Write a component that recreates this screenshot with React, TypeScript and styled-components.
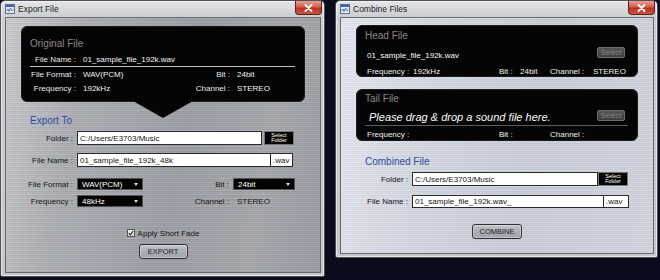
import styled, { createGlobalStyle, css } from "styled-components";

const GlobalStyle = createGlobalStyle`
  html, body {
    margin: 0;
    padding: 0;
    background: #0a0c1c;
  }
  body {
    font-family: "Liberation Sans", Arial, sans-serif;
  }
  * {
    box-sizing: border-box;
  }
`;

const steel = `
  repeating-linear-gradient(180deg, rgba(255,255,255,0.10) 0 1px, rgba(0,0,0,0.06) 1px 2px, rgba(255,255,255,0) 2px 3px, rgba(0,0,0,0.04) 3px 4px),
  linear-gradient(100deg, #caccd1 0%, #aeb0b6 22%, #9ea0a7 55%, #a6a8ae 80%, #9b9da4 100%)
`;

const frost = `
  repeating-linear-gradient(180deg, rgba(255,255,255,0.16) 0 1px, rgba(0,0,0,0.04) 1px 2px, rgba(255,255,255,0) 2px 3px, rgba(0,0,0,0.03) 3px 4px),
  linear-gradient(100deg, #e4e7ef 0%, #d3d7e1 30%, #c9cdd8 60%, #d1d4de 100%)
`;

const Desktop = styled.div`
  width: 660px;
  height: 280px;
  display: flex;
  align-items: flex-start;
  gap: 10px;
  background: #0a0c1c;
  overflow: hidden;
`;

const Window = styled.div<{ $width: number; $height: number }>`
  width: ${(p) => p.$width}px;
  height: ${(p) => p.$height}px;
  flex-shrink: 0;
  display: flex;
  flex-direction: column;
  padding: 0 3px 3px 4px;
  border: 1px solid #4e5055;
  border-radius: 5px 5px 2px 2px;
  background: linear-gradient(180deg, #e4e5e8 0, #cdcfd3 15px, #c4c6ca 100%);
  box-shadow: inset 0 0 0 1px rgba(255, 255, 255, 0.55);
`;

const TitleBar = styled.div`
  height: 16px;
  flex-shrink: 0;
  display: flex;
  align-items: center;
  gap: 3px;
`;

const Title = styled.span`
  font-size: 8.5px;
  color: #1b1b1b;
`;

const CloseButton = styled.div`
  margin-left: auto;
  margin-right: -1px;
  align-self: flex-start;
  width: 27px;
  height: 14px;
  display: flex;
  align-items: center;
  justify-content: center;
  border: 1px solid #5a2019;
  border-top: none;
  border-radius: 0 0 4px 4px;
  background: linear-gradient(180deg, #e8a094 0%, #d55e4b 45%, #ba3322 55%, #cc5540 100%);
`;

const Body = styled.div<{ $tone: "steel" | "frost" }>`
  flex: 1;
  display: flex;
  flex-direction: column;
  border: 1px solid #686a70;
  background: ${(p) => (p.$tone === "steel" ? steel : frost)};
`;

const Panel = styled.div<{ $width: number; $height: number; $top: number; $pointer?: boolean }>`
  position: relative;
  width: ${(p) => p.$width}px;
  height: ${(p) => p.$height}px;
  margin-top: ${(p) => p.$top}px;
  margin-left: 15px;
  display: flex;
  flex-direction: column;
  padding: 0 9px 0 8px;
  background: #050505;
  border: 1px solid #1e1e1e;
  border-radius: 6px;
  color: #f2f2f2;
  font-size: 8px;
  ${(p) =>
    p.$pointer &&
    css`
      &::after {
        content: "";
        position: absolute;
        top: 100%;
        left: 50%;
        transform: translateX(-50%);
        border-left: 30px solid transparent;
        border-right: 30px solid transparent;
        border-top: 17px solid #050505;
      }
    `}
`;

const PanelTitle = styled.div<{ $top: number }>`
  margin-top: ${(p) => p.$top}px;
  font-size: 10px;
  line-height: 12px;
  color: #8e8589;
`;

const Divider = styled.div<{ $top: number; $faint?: boolean }>`
  margin-top: ${(p) => p.$top}px;
  height: 1px;
  background: ${(p) => (p.$faint ? "rgba(255,255,255,0.35)" : "rgba(255,255,255,0.75)")};
`;

const InfoGrid = styled.div<{ $top: number }>`
  margin-top: ${(p) => p.$top}px;
  display: grid;
  grid-template-columns: 46px 60px 80px 60px;
  grid-auto-rows: 11px;
  column-gap: 7px;
  row-gap: 3px;
  align-items: center;
  line-height: 11px;
`;

const InfoLabel = styled.span`
  text-align: right;
  white-space: nowrap;
  color: #e8e8e8;
`;

const InfoValue = styled.span<{ $span?: number }>`
  white-space: nowrap;
  ${(p) => p.$span && `grid-column: span ${p.$span};`}
`;

const FileRow = styled.div`
  margin-top: 4px;
  height: 13px;
  display: flex;
  align-items: center;
  justify-content: space-between;
`;

const FileText = styled.span<{ $hint?: boolean }>`
  padding-left: ${(p) => (p.$hint ? 4 : 2)}px;
  padding-top: ${(p) => (p.$hint ? 3 : 5)}px;
  font-size: ${(p) => (p.$hint ? 11 : 8)}px;
  font-style: ${(p) => (p.$hint ? "italic" : "normal")};
  line-height: 13px;
  white-space: nowrap;
  color: #fafafa;
`;

const DimButton = styled.div`
  width: 28px;
  height: 11px;
  margin-right: 3px;
  display: flex;
  align-items: center;
  justify-content: center;
  border: 1px solid #6e6e6e;
  border-radius: 2px;
  background: linear-gradient(180deg, #565656, #3c3c3c);
  color: #858585;
  font-size: 7.5px;
`;

const StatRow = styled.div`
  margin-top: 4px;
  padding-left: 2px;
  display: grid;
  grid-template-columns: 46px 86px 21px 30px 43px 1fr;
  line-height: 10px;
  white-space: nowrap;
`;

const Heading = styled.div<{ $top: number }>`
  margin-top: ${(p) => p.$top}px;
  margin-left: 24px;
  font-size: 10px;
  line-height: 12px;
  color: #2c4b9f;
`;

const FieldRow = styled.div<{ $top: number }>`
  margin-top: ${(p) => p.$top}px;
  display: flex;
  align-items: center;
  font-size: 8px;
`;

const FieldLabel = styled.span`
  width: 67px;
  margin-right: 4px;
  text-align: right;
  color: #141414;
`;

const TextBox = styled.div<{ $width: number; $height: number; $suffix?: boolean }>`
  width: ${(p) => p.$width}px;
  height: ${(p) => p.$height}px;
  padding: 0 2px;
  display: flex;
  align-items: center;
  background: #fff;
  border: 1px solid #2a2a2a;
  ${(p) => p.$suffix && "border-left: none;"}
  color: #151515;
  white-space: nowrap;
  overflow: hidden;
`;

const FolderButton = styled.div<{ $gap: number }>`
  width: 30px;
  height: 14px;
  margin-left: ${(p) => p.$gap}px;
  display: flex;
  flex-direction: column;
  align-items: center;
  justify-content: center;
  background: #050505;
  border: 1px solid #777;
  color: #fff;
  font-size: 5.5px;
  line-height: 5.5px;
`;

const OptionGrid = styled.div`
  margin-top: 11px;
  width: 289px;
  display: grid;
  grid-template-columns: 67px 66px 1fr 62px;
  grid-auto-rows: 12px;
  column-gap: 4px;
  row-gap: 5px;
  align-items: center;
  font-size: 8px;
  color: #141414;
`;

const GridLabel = styled.span`
  text-align: right;
  white-space: nowrap;
`;

const Dropdown = styled.div`
  height: 12px;
  padding: 0 4px;
  display: flex;
  align-items: center;
  justify-content: space-between;
  background: #040404;
  border: 1px solid #555;
  color: #fff;
`;

const Caret = styled.span`
  width: 0;
  height: 0;
  border-left: 2px solid transparent;
  border-right: 2px solid transparent;
  border-top: 3px solid #ddd;
`;

const PlainValue = styled.span`
  padding-left: 4px;
`;

const CheckRow = styled.label`
  margin-top: 21px;
  display: flex;
  align-items: center;
  justify-content: center;
  gap: 3px;
  height: 10px;
  font-size: 8px;
  color: #151515;
`;

const CheckBox = styled.span`
  width: 8px;
  height: 8px;
  display: flex;
  align-items: center;
  justify-content: center;
  background: linear-gradient(180deg, #f4f4f4, #d8d8d8);
  border: 1px solid #555;
`;

const ActionButton = styled.div<{ $top: number; $width: number }>`
  align-self: center;
  margin-top: ${(p) => p.$top}px;
  width: ${(p) => p.$width}px;
  height: 15px;
  display: flex;
  align-items: center;
  justify-content: center;
  border: 1px solid #2f3034;
  border-radius: 3px;
  background: linear-gradient(180deg, #c3c6cd 0%, #a9adb5 55%, #9ea2aa 100%);
  box-shadow: inset 0 0 0 1px rgba(255, 255, 255, 0.35);
  color: #222;
  font-size: 7.5px;
`;

function AppIcon() {
  return (
    <svg width="10" height="10" viewBox="0 0 10 10">
      <rect x="0.5" y="0.5" width="9" height="9" fill="#e9eef6" stroke="#5b6d8a" />
      <rect x="1" y="1" width="8" height="2" fill="#3d64ad" />
      <path d="M1.5 7 L3 5 L4 7.5 L5.5 4 L7 7 L8.5 5.5" fill="none" stroke="#3d64ad" strokeWidth="0.9" />
    </svg>
  );
}

function CloseX() {
  return (
    <svg width="9" height="8" viewBox="0 0 9 8">
      <path d="M1.5 1 L7.5 7 M7.5 1 L1.5 7" stroke="#fff" strokeWidth="1.8" strokeLinecap="round" />
    </svg>
  );
}

function Check() {
  return (
    <svg width="6" height="6" viewBox="0 0 6 6">
      <path d="M0.8 3.2 L2.4 4.8 L5.2 1" fill="none" stroke="#222" strokeWidth="1.1" />
    </svg>
  );
}

function WindowFrame(props: { title: string; width: number; height: number; children: React.ReactNode; tone: "steel" | "frost" }) {
  return (
    <Window $width={props.width} $height={props.height}>
      <TitleBar>
        <AppIcon />
        <Title>{props.title}</Title>
        <CloseButton>
          <CloseX />
        </CloseButton>
      </TitleBar>
      <Body $tone={props.tone}>{props.children}</Body>
    </Window>
  );
}

function SourcePanel(props: { title: string; top: number; fileName?: string; info?: boolean }) {
  return (
    <Panel $width={282} $height={52} $top={props.top}>
      <PanelTitle $top={props.info ? 4 : 3}>{props.title}</PanelTitle>
      <FileRow>
        {props.fileName ? (
          <FileText>{props.fileName}</FileText>
        ) : (
          <FileText $hint>Please drag &amp; drop a sound file here.</FileText>
        )}
        <DimButton>Select</DimButton>
      </FileRow>
      <Divider $top={props.info ? 4 : 3} $faint={!props.info} />
      <StatRow>
        <span>Frequency :</span>
        <span>{props.info ? "192kHz" : ""}</span>
        <span>Bit :</span>
        <span>{props.info ? "24bit" : ""}</span>
        <span>Channel :</span>
        <span>{props.info ? "STEREO" : ""}</span>
      </StatRow>
    </Panel>
  );
}

export default function App() {
  return (
    <>
      <GlobalStyle />
      <Desktop>
        <WindowFrame title="Export File" width={325} height={277} tone="steel">
          <Panel $width={284} $height={76} $top={8} $pointer>
            <PanelTitle $top={11}>Original File</PanelTitle>
            <InfoGrid $top={4}>
              <InfoLabel>File Name :</InfoLabel>
              <InfoValue $span={3}>01_sample_file_192k.wav</InfoValue>
            </InfoGrid>
            <Divider $top={1} />
            <InfoGrid $top={2}>
              <InfoLabel>File Format :</InfoLabel>
              <InfoValue>WAV(PCM)</InfoValue>
              <InfoLabel>Bit :</InfoLabel>
              <InfoValue>24bit</InfoValue>
              <InfoLabel>Frequency :</InfoLabel>
              <InfoValue>192kHz</InfoValue>
              <InfoLabel>Channel :</InfoLabel>
              <InfoValue>STEREO</InfoValue>
            </InfoGrid>
          </Panel>

          <Heading $top={13}>Export To</Heading>
          <FieldRow $top={4}>
            <FieldLabel>Folder :</FieldLabel>
            <TextBox $width={185} $height={14}>C:/Users/E3703/Music</TextBox>
            <FolderButton $gap={2}>
              <span>Select</span>
              <span>Folder</span>
            </FolderButton>
          </FieldRow>
          <FieldRow $top={8}>
            <FieldLabel>File Name :</FieldLabel>
            <TextBox $width={194} $height={14}>01_sample_file_192k_48k</TextBox>
            <TextBox $width={22} $height={14} $suffix>.wav</TextBox>
          </FieldRow>

          <OptionGrid>
            <GridLabel>File Format :</GridLabel>
            <Dropdown>
              WAV(PCM) <Caret />
            </Dropdown>
            <GridLabel>Bit :</GridLabel>
            <Dropdown>
              24bit <Caret />
            </Dropdown>
            <GridLabel>Frequency :</GridLabel>
            <Dropdown>
              48kHz <Caret />
            </Dropdown>
            <GridLabel>Channel :</GridLabel>
            <PlainValue>STEREO</PlainValue>
          </OptionGrid>

          <CheckRow>
            <CheckBox>
              <Check />
            </CheckBox>
            Apply Short Fade
          </CheckRow>
          <ActionButton $top={6} $width={49}>
            EXPORT
          </ActionButton>
        </WindowFrame>

        <WindowFrame title="Combine Files" width={323} height={258} tone="frost">
          <SourcePanel title="Head File" top={7} fileName="01_sample_file_192k.wav" info />
          <SourcePanel title="Tail File" top={12} />

          <Heading $top={15}>Combined File</Heading>
          <FieldRow $top={4}>
            <FieldLabel>Folder :</FieldLabel>
            <TextBox $width={186} $height={14}>C:/Users/E3703/Music</TextBox>
            <FolderButton $gap={0}>
              <span>Select</span>
              <span>Folder</span>
            </FolderButton>
          </FieldRow>
          <FieldRow $top={9}>
            <FieldLabel>File Name :</FieldLabel>
            <TextBox $width={192} $height={13}>01_sample_file_192k.wav_</TextBox>
            <TextBox $width={25} $height={13} $suffix>.wav</TextBox>
          </FieldRow>
          <ActionButton $top={16} $width={50}>
            COMBINE
          </ActionButton>
        </WindowFrame>
      </Desktop>
    </>
  );
}
